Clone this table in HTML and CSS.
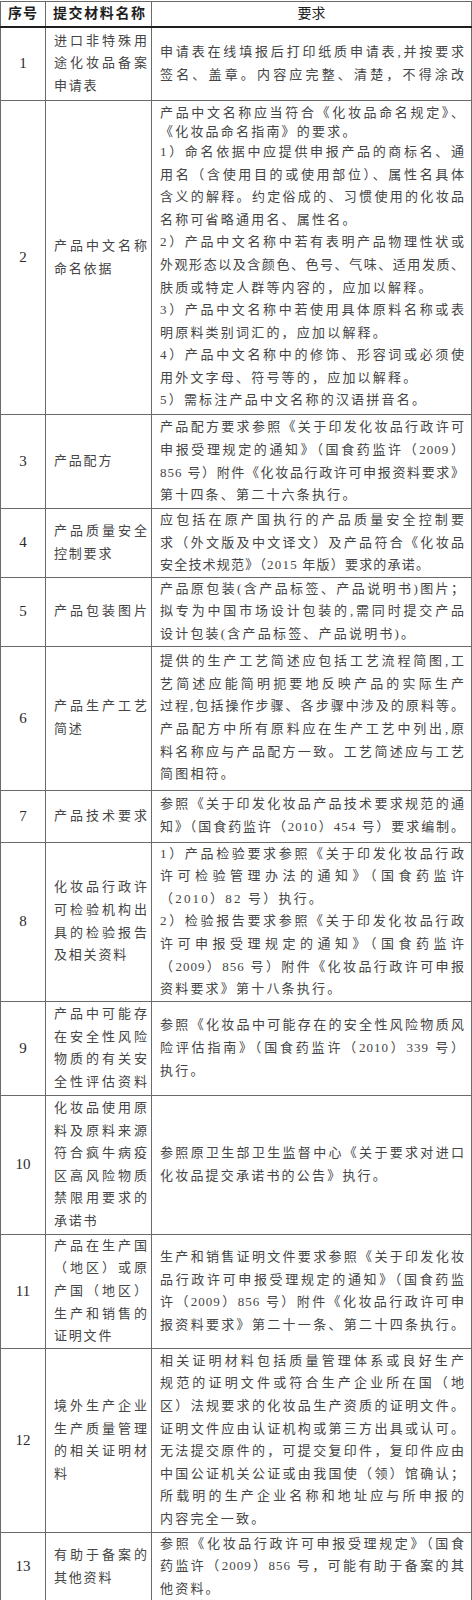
FILE: index.html
```html
<!DOCTYPE html>
<html lang="zh-CN">
<head>
<meta charset="utf-8">
<title>进口非特殊用途化妆品备案资料要求</title>
<link rel="stylesheet" href="styles.css">
</head>
<body>
<table class="req">
<colgroup><col class="c-no"><col class="c-name"><col class="c-req"></colgroup>
<thead>
<tr class="r0"><th class="no-h">序号</th><th class="name-h">提交材料名称</th><th class="req-h">要求</th></tr>
</thead>
<tbody>
<tr class="r1">
<td class="no">1</td>
<td class="name"><span class="ln">进口非特殊用</span><span class="ln">途化妆品备案</span><span class="ln e">申请表</span></td>
<td class="txt"><span class="ln">申请表在线填报后打印纸质申请表,并按要求</span><span class="ln">签名、盖章。内容应完整、清楚，不得涂改</span></td>
</tr>
<tr class="r2">
<td class="no">2</td>
<td class="name"><span class="ln">产品中文名称</span><span class="ln e">命名依据</span></td>
<td class="txt">
<span class="ln lead">产品中文名称应当符合《化妆品命名规定》、</span>
<span class="ln e lead">《化妆品命名指南》的要求。</span>
<span class="ln">1）命名依据中应提供申报产品的商标名、通</span>
<span class="ln">用名（含使用目的或使用部位）、属性名具体</span>
<span class="ln">含义的解释。约定俗成的、习惯使用的化妆品</span>
<span class="ln e">名称可省略通用名、属性名。</span>
<span class="ln">2）产品中文名称中若有表明产品物理性状或</span>
<span class="ln">外观形态以及含颜色、色号、气味、适用发质、</span>
<span class="ln e">肤质或特定人群等内容的，应加以解释。</span>
<span class="ln">3）产品中文名称中若使用具体原料名称或表</span>
<span class="ln e">明原料类别词汇的，应加以解释。</span>
<span class="ln">4）产品中文名称中的修饰、形容词或必须使</span>
<span class="ln e">用外文字母、符号等的，应加以解释。</span>
<span class="ln e">5）需标注产品中文名称的汉语拼音名。</span>
</td>
</tr>
<tr class="r3">
<td class="no">3</td>
<td class="name"><span class="ln e">产品配方</span></td>
<td class="txt">
<span class="ln">产品配方要求参照《关于印发化妆品行政许可</span>
<span class="ln">申报受理规定的通知》（国食药监许（2009）</span>
<span class="ln">856 号）附件《化妆品行政许可申报资料要求》</span>
<span class="ln e">第十四条、第二十六条执行。</span>
</td>
</tr>
<tr class="r4">
<td class="no">4</td>
<td class="name"><span class="ln">产品质量安全</span><span class="ln e">控制要求</span></td>
<td class="txt">
<span class="ln">应包括在原产国执行的产品质量安全控制要</span>
<span class="ln">求（外文版及中文译文）及产品符合《化妆品</span>
<span class="ln e t">安全技术规范》（2015 年版）要求的承诺。</span>
</td>
</tr>
<tr class="r5">
<td class="no">5</td>
<td class="name"><span class="ln">产品包装图片</span></td>
<td class="txt">
<span class="ln">产品原包装(含产品标签、产品说明书)图片；</span>
<span class="ln">拟专为中国市场设计包装的,需同时提交产品</span>
<span class="ln e">设计包装(含产品标签、产品说明书)。</span>
</td>
</tr>
<tr class="r6">
<td class="no">6</td>
<td class="name"><span class="ln">产品生产工艺</span><span class="ln e">简述</span></td>
<td class="txt">
<span class="ln">提供的生产工艺简述应包括工艺流程简图,工</span>
<span class="ln">艺简述应能简明扼要地反映产品的实际生产</span>
<span class="ln">过程,包括操作步骤、各步骤中涉及的原料等。</span>
<span class="ln">产品配方中所有原料应在生产工艺中列出,原</span>
<span class="ln">料名称应与产品配方一致。工艺简述应与工艺</span>
<span class="ln e">简图相符。</span>
</td>
</tr>
<tr class="r7">
<td class="no">7</td>
<td class="name"><span class="ln">产品技术要求</span></td>
<td class="txt">
<span class="ln">参照《关于印发化妆品产品技术要求规范的通</span>
<span class="ln">知》（国食药监许（2010）454 号）要求编制。</span>
</td>
</tr>
<tr class="r8">
<td class="no">8</td>
<td class="name"><span class="ln">化妆品行政许</span><span class="ln">可检验机构出</span><span class="ln">具的检验报告</span><span class="ln e">及相关资料</span></td>
<td class="txt">
<span class="ln">1）产品检验要求参照《关于印发化妆品行政</span>
<span class="ln">许可检验管理办法的通知》（国食药监许</span>
<span class="ln e">（2010）82 号）执行。</span>
<span class="ln">2）检验报告要求参照《关于印发化妆品行政</span>
<span class="ln">许可申报受理规定的通知》（国食药监许</span>
<span class="ln">（2009）856 号）附件《化妆品行政许可申报</span>
<span class="ln e">资料要求》第十八条执行。</span>
</td>
</tr>
<tr class="r9">
<td class="no">9</td>
<td class="name"><span class="ln">产品中可能存</span><span class="ln">在安全性风险</span><span class="ln">物质的有关安</span><span class="ln">全性评估资料</span></td>
<td class="txt">
<span class="ln">参照《化妆品中可能存在的安全性风险物质风</span>
<span class="ln">险评估指南》（国食药监许（2010）339 号）</span>
<span class="ln e">执行。</span>
</td>
</tr>
<tr class="r10">
<td class="no">10</td>
<td class="name"><span class="ln">化妆品使用原</span><span class="ln">料及原料来源</span><span class="ln">符合疯牛病疫</span><span class="ln">区高风险物质</span><span class="ln">禁限用要求的</span><span class="ln e">承诺书</span></td>
<td class="txt">
<span class="ln">参照原卫生部卫生监督中心《关于要求对进口</span>
<span class="ln e">化妆品提交承诺书的公告》执行。</span>
</td>
</tr>
<tr class="r11">
<td class="no">11</td>
<td class="name"><span class="ln">产品在生产国</span><span class="ln">（地区）或原</span><span class="ln">产国（地区）</span><span class="ln">生产和销售的</span><span class="ln e">证明文件</span></td>
<td class="txt">
<span class="ln">生产和销售证明文件要求参照《关于印发化妆</span>
<span class="ln">品行政许可申报受理规定的通知》（国食药监</span>
<span class="ln">许（2009）856 号）附件《化妆品行政许可申</span>
<span class="ln">报资料要求》第二十一条、第二十四条执行。</span>
</td>
</tr>
<tr class="r12">
<td class="no">12</td>
<td class="name"><span class="ln">境外生产企业</span><span class="ln">生产质量管理</span><span class="ln">的相关证明材</span><span class="ln e">料</span></td>
<td class="txt">
<span class="ln">相关证明材料包括质量管理体系或良好生产</span>
<span class="ln">规范的证明文件或符合生产企业所在国（地</span>
<span class="ln">区）法规要求的化妆品生产资质的证明文件。</span>
<span class="ln">证明文件应由认证机构或第三方出具或认可。</span>
<span class="ln">无法提交原件的，可提交复印件，复印件应由</span>
<span class="ln">中国公证机关公证或由我国使（领）馆确认；</span>
<span class="ln">所载明的生产企业名称和地址应与所申报的</span>
<span class="ln e">内容完全一致。</span>
</td>
</tr>
<tr class="r13">
<td class="no">13</td>
<td class="name"><span class="ln">有助于备案的</span><span class="ln e">其他资料</span></td>
<td class="txt">
<span class="ln">参照《化妆品行政许可申报受理规定》（国食</span>
<span class="ln">药监许（2009）856 号，可能有助于备案的其</span>
<span class="ln e">他资料。</span>
</td>
</tr>
</tbody>
</table>
</body>
</html>
```

FILE: styles.css
```css
html, body {
  margin: 0;
  padding: 0;
  background: #ffffff;
}

body {
  font-family: "Liberation Serif", "Noto Sans CJK SC", serif;
  color: #454545;
}

.req {
  border-collapse: collapse;
  table-layout: fixed;
  width: 471px;
  margin-top: 1px;
  font-size: 13px;
}

.c-no { width: 45px; }
.c-name { width: 106px; }
.c-req { width: 320px; }

.req th,
.req td {
  border: 1px solid #6a6a6a;
  padding: 0;
  vertical-align: middle;
}

.req thead th {
  border-bottom: 2px solid #1e1e1e;
  color: #1e1e1e;
  font-size: 14px;
  line-height: 22px;
}

.req th.no-h {
  text-align: center;
  font-weight: 700;
  letter-spacing: 1px;
}

.req th.name-h {
  text-align: left;
  padding-left: 7px;
  font-weight: 700;
  letter-spacing: 1.6px;
}

.req th.req-h {
  text-align: center;
  font-weight: 400;
}

.r0 { height: 25px; }
.r1 { height: 74px; }
.r2 { height: 314px; }
.r3 { height: 94px; }
.r4 { height: 68px; }
.r5 { height: 68px; }
.r6 { height: 144px; }
.r7 { height: 52px; }
.r8 { height: 158px; }
.r9 { height: 94px; }
.r10 { height: 139px; }
.r11 { height: 113px; }
.r12 { height: 184px; }
.r13 { height: 68px; }

.req td.no {
  text-align: center;
  font-size: 15px;
  color: #2a2a2a;
}

.req td.name {
  padding-left: 8px;
  padding-right: 3px;
}

.req td.txt {
  padding-left: 8px;
  padding-right: 6px;
}

.ln {
  display: block;
  line-height: 22.6px;
  letter-spacing: 1px;
  text-align: justify;
  text-align-last: justify;
}

.ln.e {
  letter-spacing: 2.2px;
  text-align-last: left;
}

.name .ln.e {
  letter-spacing: 1.8px;
}

.ln.e.t {
  letter-spacing: 1.2px;
}

.ln.lead {
  line-height: 19px;
}
```
